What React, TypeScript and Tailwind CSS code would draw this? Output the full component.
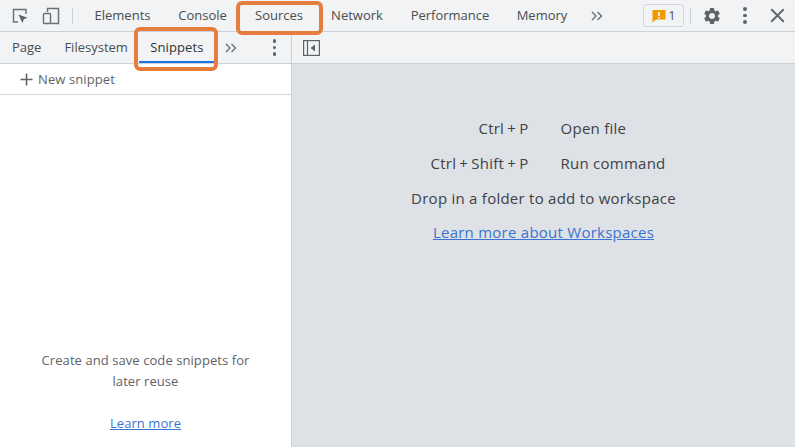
import { X } from "lucide-react";
import { MdSettings } from "react-icons/md";

function Chevrons({ className }: { className: string }) {
  return (
    <svg viewBox="0 0 12 10" className={className} fill="none" stroke="#6b6e72" strokeWidth="1.4">
      <path d="M1 1l4 4-4 4M6.5 1l4 4-4 4" />
    </svg>
  );
}

function Dots() {
  return (
    <div className="flex flex-col gap-[3px]">
      <span className="size-[3.5px] rounded-full bg-[#5f6368]" />
      <span className="size-[3.5px] rounded-full bg-[#5f6368]" />
      <span className="size-[3.5px] rounded-full bg-[#5f6368]" />
    </div>
  );
}

const mainTabs = [
  { label: "Elements", w: "w-[83px]" },
  { label: "Console", w: "w-[77px]" },
  { label: "Sources", w: "w-[76px]" },
  { label: "Network", w: "w-[80px]" },
  { label: "Performance", w: "w-[106px]" },
  { label: "Memory", w: "w-[78px]" },
];

export default function App() {
  return (
    <div className="relative flex h-[447px] w-[795px] flex-col overflow-hidden bg-white font-['Open_Sans',sans-serif] text-[13px] text-[#4a4d51]">
      <div className="flex h-[32px] shrink-0 items-center border-b border-[#cdd0d4] bg-[#f1f3f4] pl-[11px]">
        <svg viewBox="0 0 18 18" className="size-[18px]" fill="none">
          <path d="M7 15H2.5V2.5H15V7" stroke="#6b6e72" strokeWidth="1.4" />
          <path d="M7.5 7.5l9 3.2-3.6 1.6-1.6 3.8z" fill="#5f6368" />
        </svg>
        <svg viewBox="0 0 18 18" className="ml-[13px] size-[18px]" fill="none" stroke="#6b6e72" strokeWidth="1.4">
          <path d="M5.5 5V1.5H16.5V16.5H9" />
          <rect x="1.5" y="6.5" width="7" height="10" rx="1" />
        </svg>
        <div className="ml-[12px] mr-[8px] h-[16px] w-px bg-[#cdd0d4]" />
        <div className="flex items-center pt-[1px]">
          {mainTabs.map((t) => (
            <div key={t.label} className={`flex justify-center ${t.w}`}>
              {t.label}
            </div>
          ))}
        </div>
        <Chevrons className="ml-[10px] h-[10px] w-[12px]" />
        <div className="ml-[40px] flex h-[23px] w-[41px] items-center justify-center gap-[3px] rounded-[3px] border border-[#d6d8db] text-[12px]">
          <svg viewBox="0 0 14 14" className="size-[14px]">
            <path d="M0.5 1h13v9.5H4L0.5 13.5z" fill="#f29900" />
            <path d="M6.2 3h1.6v4H6.2zM6.2 8h1.6v1.5H6.2z" fill="#fff" />
          </svg>
          1
        </div>
        <div className="ml-[6px] h-[16px] w-px bg-[#cdd0d4]" />
        <MdSettings size={20} className="ml-[11px]" color="#5f6368" />
        <div className="ml-[21px]">
          <Dots />
        </div>
        <X size={23} className="ml-[19px]" color="#5f6368" strokeWidth={1.9} />
      </div>

      <div className="flex min-h-0 flex-1">
        <div className="flex w-[292px] shrink-0 flex-col border-r border-[#cdd0d4]">
          <div className="flex h-[32px] shrink-0 items-center border-b border-[#cdd0d4] bg-[#f1f3f4] pl-[12px]">
            <span>Page</span>
            <span className="ml-[23px]">Filesystem</span>
            <div className="relative ml-[11px] flex h-full w-[75px] items-center justify-center pl-[1px] tracking-[0.1px] text-[#303336]">
              Snippets
              <span className="absolute bottom-0 left-0 right-0 h-[2px] bg-[#1a73e8]" />
            </div>
            <Chevrons className="ml-[11px] h-[10px] w-[12px]" />
            <div className="ml-[36px]">
              <Dots />
            </div>
          </div>
          <div className="flex h-[31px] shrink-0 items-center border-b border-[#d4d6d9] pl-[20px]">
            <svg viewBox="0 0 13 13" className="size-[13px]" stroke="#5f6368" strokeWidth="1.6">
              <path d="M6.5 0.5v12M0.5 6.5h12" />
            </svg>
            <span className="ml-[5px] pt-[2px] tracking-[0.1px] text-[#5f6368]">New snippet</span>
          </div>
          <div className="flex flex-1 flex-col items-center justify-end pb-[13px] text-center leading-[21px] tracking-[0.07px] text-[#5f6368]">
            <p className="w-[230px]">Create and save code snippets for later reuse</p>
            <a className="mt-[21px] text-[#3a74d0] underline">Learn more</a>
          </div>
        </div>

        <div className="flex min-w-0 flex-1 flex-col bg-[#dee1e6]">
          <div className="flex h-[32px] shrink-0 items-center border-b border-[#cdd0d4] bg-[#f1f3f4] pl-[11px]">
            <svg viewBox="0 0 17 16" className="h-[16px] w-[17px]" fill="none" stroke="#5f6368" strokeWidth="1.2">
              <rect x="0.6" y="0.6" width="15.8" height="14.8" />
              <path d="M4.5 1v14" />
              <path d="M12 4.5v7L7.5 8z" fill="#5f6368" stroke="none" />
            </svg>
          </div>
          <div className="flex flex-col items-center pt-[54px] text-[15px] leading-[20px] tracking-[0.25px] text-[#3f4245]">
            <div className="grid grid-cols-[auto_auto] gap-x-[32px] gap-y-[15px] pl-[9px]">
              <span className="text-right [word-spacing:-1px]">Ctrl + P</span>
              <span>Open file</span>
              <span className="text-right [word-spacing:-1px]">Ctrl + Shift + P</span>
              <span>Run command</span>
            </div>
            <p className="mt-[15px]">Drop in a folder to add to workspace</p>
            <a className="mt-[14px] text-[#3a74d0] underline">Learn more about Workspaces</a>
          </div>
        </div>
      </div>

      <div className="absolute left-[236px] top-[1px] h-[34px] w-[87px] rounded-[6px] border-[4px] border-[#e57d3e]" />
      <div className="absolute left-[134px] top-[27px] h-[44px] w-[84px] rounded-[6px] border-[4px] border-[#e57d3e]" />
    </div>
  );
}
